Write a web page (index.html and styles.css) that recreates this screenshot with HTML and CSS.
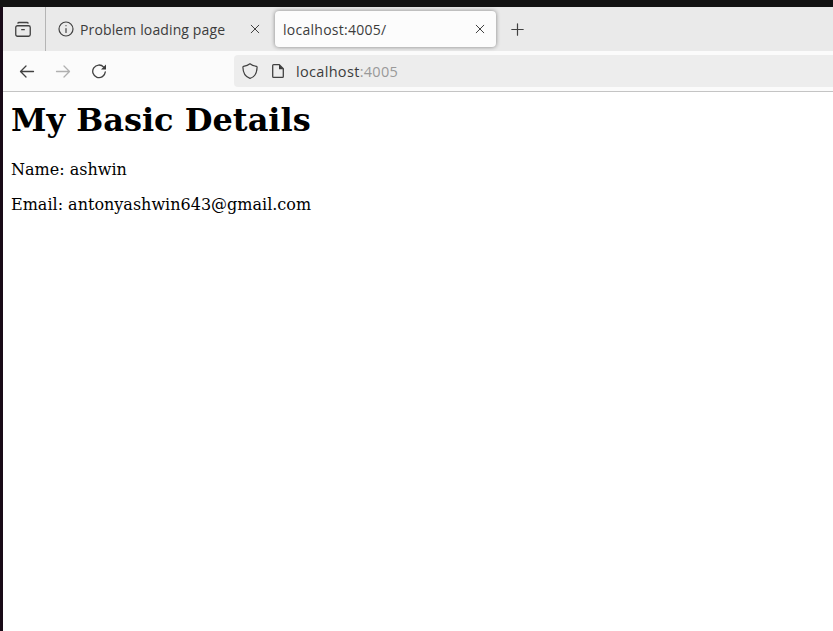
FILE: index.html
```html
<!DOCTYPE html>
<html lang="en">
<head>
<meta charset="utf-8">
<title>localhost:4005/</title>
<link rel="stylesheet" href="styles.css">
</head>
<body>
<div class="window">
  <header class="tabs">
    <div class="recent">
      <svg class="icon" width="16" height="16" viewBox="0 0 16 16"><rect x=".75" y="4.75" width="14.5" height="10.5" rx="1.7"/><path d="M3 2.2V2q0-.5 1-.5h8q1 0 1 .5v.2M6.700 8.700h2.600"/></svg>
    </div>
    <div class="tab">
      <svg class="icon thin" width="16" height="16" viewBox="0 0 16 16"><circle cx="8" cy="8" r="7"/><path d="M8 7.500v4M8 4.500v.2"/></svg>
      <span class="label loading">Problem loading page</span>
      <svg class="icon close" width="10" height="10" viewBox="0 0 10 10"><path d="M1.200 1.200l7.600 7.600M8.800 1.200l-7.600 7.600"/></svg>
    </div>
    <div class="tab active">
      <span class="label local">localhost:4005/</span>
      <svg class="icon close" width="10" height="10" viewBox="0 0 10 10"><path d="M1.200 1.200l7.600 7.600M8.800 1.200l-7.600 7.600"/></svg>
    </div>
    <svg class="icon plus" width="13" height="13" viewBox="0 0 13 13"><path d="M6.500 .8v11.400M.8 6.500h11.400"/></svg>
  </header>
  <nav class="toolbar">
    <svg class="icon arrow" width="16" height="16" viewBox="0 0 16 16"><path d="M14.500 8.500H1.800M7 3L1.500 8.500 7 14"/></svg>
    <svg class="icon arrow disabled" width="16" height="16" viewBox="0 0 16 16"><path d="M1.500 8.500h12.700M9 3l5.500 5.500L9 14"/></svg>
    <svg class="icon arrow" width="16" height="16" viewBox="0 0 16 16"><path d="M12.700 4.100A6.300 6.300 0 1 0 14.300 8.900"/><path class="solid" d="M15 1.500v5H10z"/></svg>
    <div class="address">
      <svg class="icon thin" width="16" height="16" viewBox="0 0 16 16"><path d="M8 .8C6.300 2.200 4 3 1.500 3.300 1 3.400.9 3.700.9 4.300 1 9.500 3 13.800 8 15.400c5-1.600 7-5.900 7.100-11.100 0-.6-.1-.9-.6-1C12 3 9.700 2.200 8 .8z"/></svg>
      <svg class="icon page" width="14" height="16" viewBox="0 0 14 16"><path d="M8.300 1.700H2.600Q1.700 1.700 1.700 2.600V13.400Q1.700 14.300 2.600 14.300H11.400Q12.300 14.300 12.300 13.400V5.600z"/><path class="solid" d="M8 1.500v4.700h4.700z"/></svg>
      <span class="label url">localhost<span class="port">:4005</span></span>
    </div>
  </nav>
  <main class="content">
    <h1>My Basic Details</h1>
    <p>Name: ashwin</p>
    <p>Email: antonyashwin643@gmail.com</p>
  </main>
</div>
</body>
</html>
```
FILE: styles.css
```css
* { box-sizing: border-box; }
html, body { margin: 0; height: 100%; }
body { background: linear-gradient(#131313 7px, #180a17 7px); padding: 7px 0 0 3px; overflow: hidden; }
.window { height: 100%; background: #fff; }
.tabs { height: 44px; background: #eaeaea; display: flex; align-items: center; }
.recent { width: 43px; height: 44px; padding-left: 12px; border-right: 1px solid #b5b5b5; display: flex; align-items: center; }
.icon { display: block; flex: none; fill: none; stroke: #414141; stroke-width: 1.3; stroke-linecap: round; stroke-linejoin: round; }
.thin { stroke-width: 1.2; }
.close { stroke-width: 1; margin-left: auto; }
.plus { stroke-width: 1.2; margin: 1px 0 0 15px; }
.disabled { stroke: #b0b0b0; }
.solid { fill: #3c3c3c; stroke: none; }
.label { padding-top: 2px; font-family: "Open Sans", sans-serif; font-size: 14px; line-height: 20px; color: #3c3c3c; white-space: nowrap; }
.tab { width: 229px; height: 36px; padding: 0 15px 0 12px; display: flex; align-items: center; }
.loading { margin-left: 6px; letter-spacing: .13px; }
.local { letter-spacing: .27px; }
.active { width: 221px; padding: 0 11px 0 8px; background: #fcfcfc; border-radius: 4px; box-shadow: 0 0 4px rgba(0,0,0,.45); }
.toolbar { height: 41px; background: #fbfbfb; border-bottom: 1px solid #c4c4c4; padding-left: 16px; display: flex; align-items: center; gap: 20px; }
.address { flex: 1; height: 32px; margin-left: 107px; padding-left: 8px; background: #ededed; border-radius: 4px 0 0 4px; display: flex; align-items: center; }
.page { margin-left: 13px; stroke-width: 1.3; }
.url { margin-left: 11px; font-size: 14.5px; letter-spacing: .32px; }
.port { color: #999; }
.content { padding: 10px 8px; color: #000; font: 16px/19px "DejaVu Serif", serif; }
h1 { margin: 0 0 21px; font-size: 32px; line-height: 37px; }
p { margin: 0 0 16px; }
```
